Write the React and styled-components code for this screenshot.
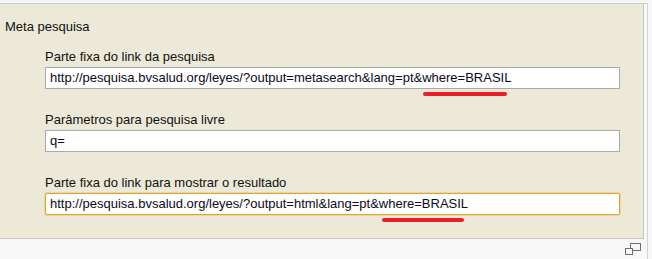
import React from "react";
import styled, { createGlobalStyle } from "styled-components";

const Global = createGlobalStyle`
  html, body { margin: 0; padding: 0; background: #f6f6f6; }
  body { font-family: "Liberation Sans", Arial, sans-serif; font-size: 13px; color: #111; }
`;

const Page = styled.div`
  width: 652px;
  height: 259px;
  box-sizing: border-box;
  padding-top: 3px;
  background: #f6f6f6;
  display: flex;
  flex-direction: column;
  overflow: hidden;
`;

const Frame = styled.div`
  width: 648px;
  box-sizing: border-box;
  border-top: 1px solid #cfcfcf;
  border-right: 1px solid #d4d4d4;
  background: #f8f8f8;
  display: flex;
  flex-direction: column;
  flex: 1;
`;

const Panel = styled.div`
  width: 644px;
  height: 235px;
  box-sizing: border-box;
  background: #ece9d8;
  border-right: 1px solid #c6c6c6;
  border-bottom: 1px solid #c6c6c6;
  padding: 15px 0 0 5px;
  display: flex;
  flex-direction: column;
`;

const Title = styled.div`
  line-height: 15px;
  margin-bottom: 15px;
`;

const Group = styled.div`
  display: flex;
  flex-direction: column;
  padding-left: 40px;
  height: 64px;
`;

const Label = styled.div`
  line-height: 15px;
  margin-bottom: 3px;
`;

const FieldWrap = styled.div`
  position: relative;
  width: 575px;
`;

const Field = styled.div`
  box-sizing: border-box;
  width: 575px;
  height: 22px;
  background: #fff;
  border: 1px solid ${(p) => (p.$focus ? "#d9a441" : "#a9a9a9")};
  border-radius: ${(p) => (p.$focus ? "2px" : "0")};
  box-shadow: ${(p) => (p.$focus ? "0 0 0 1px #f3d58f" : "none")};
  padding: 0 4px;
  line-height: 20px;
  white-space: nowrap;
  color: #0a0a20;
`;

const Mark = styled.span`
  position: absolute;
  height: 4px;
  border-radius: 2px;
  background: #e8202a;
  top: 25px;
`;

const Footer = styled.div`
  flex: 1;
  display: flex;
  justify-content: flex-end;
  align-items: flex-start;
  padding: 4px 6px 0 0;
`;

const ResizeIcon = () => (
  <svg width="16" height="12" viewBox="0 0 16 12">
    <rect x="5.5" y="0.5" width="10" height="7" fill="none" stroke="#6e6e6e" />
    <rect x="0.5" y="5.5" width="7" height="6" fill="#f8f8f8" stroke="#6e6e6e" />
  </svg>
);

const fields = [
  {
    label: "Parte fixa do link da pesquisa",
    value: "http://pesquisa.bvsalud.org/leyes/?output=metasearch&lang=pt&where=BRASIL",
    mark: { left: 378, width: 84 },
  },
  { label: "Parâmetros para pesquisa livre", value: "q=" },
  {
    label: "Parte fixa do link para mostrar o resultado",
    value: "http://pesquisa.bvsalud.org/leyes/?output=html&lang=pt&where=BRASIL",
    mark: { left: 337, width: 82 },
    focus: true,
  },
];

export default function App() {
  return (
    <>
      <Global />
      <Page>
        <Frame>
          <Panel>
            <Title>Meta pesquisa</Title>
            {fields.map((f) => (
              <Group key={f.label}>
                <Label>{f.label}</Label>
                <FieldWrap>
                  <Field $focus={f.focus}>{f.value}</Field>
                  {f.mark && (
                    <Mark style={{ left: f.mark.left, width: f.mark.width }} />
                  )}
                </FieldWrap>
              </Group>
            ))}
          </Panel>
          <Footer>
            <ResizeIcon />
          </Footer>
        </Frame>
      </Page>
    </>
  );
}
